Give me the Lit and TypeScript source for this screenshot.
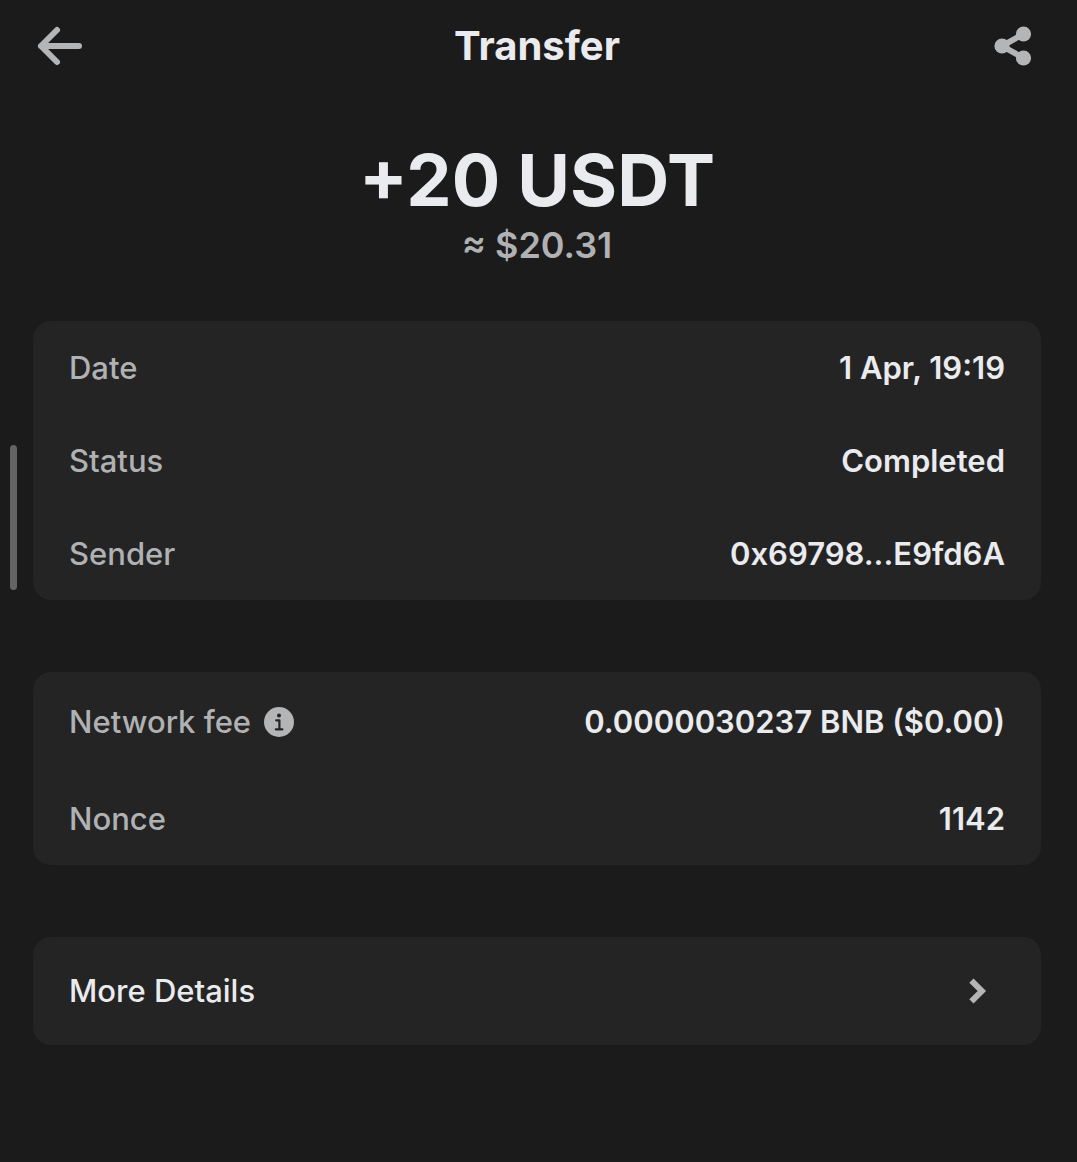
import { LitElement, html, css, nothing } from "lit";
import { customElement, property } from "lit/decorators.js";

interface Detail {
  label: string;
  value: string;
  info?: boolean;
}

const SUMMARY: Detail[] = [
  { label: "Date", value: "1 Apr, 19:19" },
  { label: "Status", value: "Completed" },
  { label: "Sender", value: "0x69798...E9fd6A" },
];

const NETWORK: Detail[] = [
  { label: "Network fee", value: "0.0000030237 BNB ($0.00)", info: true },
  { label: "Nonce", value: "1142" },
];

@customElement("detail-card")
export class DetailCard extends LitElement {
  @property({ attribute: false }) items: Detail[] = [];

  static styles = css`
    :host {
      display: block;
      background: #242424;
      border-radius: 18px;
      padding: 0 36px;
      font-size: 31px;
      line-height: 40px;
    }
    .list {
      margin: 0;
    }
    .row {
      display: flex;
      align-items: center;
      justify-content: space-between;
      gap: 24px;
      min-height: 93px;
    }
    .tall {
      min-height: 100px;
    }
    .label {
      display: flex;
      align-items: center;
      gap: 12px;
      color: #b0b1b3;
      font-weight: 500;
    }
    .value {
      margin: 0;
      color: #eaebee;
      font-weight: 600;
      text-align: right;
    }
    .info {
      display: block;
      padding: 0;
      border: 0;
      background: none;
      color: #b4b5b7;
      cursor: pointer;
    }
    .info svg {
      display: block;
    }
  `;

  render() {
    return html`
      <dl class="list">
        ${this.items.map(
          (item) => html`
            <div class="row ${item.info ? "tall" : ""}">
              <dt class="label">
                ${item.label}
                ${item.info
                  ? html`<button class="info" type="button" aria-label="About the network fee">
                      <svg width="32" height="32" viewBox="0 0 32 32" aria-hidden="true">
                        <circle cx="16" cy="16" r="15" fill="currentColor" />
                        <circle cx="16" cy="9.6" r="2" fill="#242424" />
                        <path
                          d="M13.2 14.3h3.2v9M12.8 23.3h6.6"
                          fill="none"
                          stroke="#242424"
                          stroke-width="2.2"
                          stroke-linecap="round"
                          stroke-linejoin="round"
                        />
                      </svg>
                    </button>`
                  : nothing}
              </dt>
              <dd class="value">${item.value}</dd>
            </div>
          `,
        )}
      </dl>
    `;
  }
}

@customElement("app-root")
export class AppRoot extends LitElement {
  static styles = css`
    :host {
      display: block;
      position: relative;
      box-sizing: border-box;
      min-height: 100vh;
      padding: 0 36px 36px 33px;
      background: #1b1b1b;
      color: #eaebee;
      font-family: Inter, "Liberation Sans", sans-serif;
    }
    .header {
      display: grid;
      grid-template-columns: 52px 1fr 52px;
      align-items: center;
      height: 92px;
    }
    .title {
      margin: 0;
      font-size: 40px;
      line-height: 52px;
      font-weight: 700;
      text-align: center;
    }
    .icon-button {
      display: block;
      padding: 0;
      border: 0;
      background: none;
      color: #b4b5b7;
      cursor: pointer;
    }
    .icon-button svg {
      display: block;
    }
    .summary {
      display: flex;
      flex-direction: column;
      align-items: center;
      padding: 45px 0 54px;
    }
    .amount {
      margin: 0;
      font-size: 72px;
      line-height: 86px;
      font-weight: 700;
    }
    .fiat {
      margin: 0;
      color: #b0b1b3;
      font-size: 36px;
      line-height: 44px;
      font-weight: 600;
    }
    .cards {
      display: flex;
      flex-direction: column;
      gap: 72px;
    }
    .more {
      display: flex;
      align-items: center;
      justify-content: space-between;
      min-height: 108px;
      padding: 0 36px;
      border: 0;
      border-radius: 18px;
      background: #242424;
      color: #eaebee;
      font-family: inherit;
      font-size: 31px;
      line-height: 40px;
      font-weight: 500;
      text-align: left;
      cursor: pointer;
    }
    .chevron {
      color: #b4b5b7;
    }
    .edge-handle {
      position: absolute;
      left: 10px;
      top: 445px;
      width: 7px;
      height: 145px;
      border-radius: 4px;
      background: #646464;
    }
  `;

  render() {
    return html`
      <header class="header">
        <button class="icon-button" type="button" aria-label="Back">
          <svg width="52" height="52" viewBox="0 0 52 52" aria-hidden="true">
            <path
              d="M46 26H8M24 10L8 26L24 42"
              fill="none"
              stroke="currentColor"
              stroke-width="6"
              stroke-linecap="round"
              stroke-linejoin="round"
            />
          </svg>
        </button>
        <h1 class="title">Transfer</h1>
        <button class="icon-button" type="button" aria-label="Share">
          <svg width="52" height="52" viewBox="0 0 52 52" aria-hidden="true">
            <path d="M34.5 14L13 26L34.5 38" fill="none" stroke="currentColor" stroke-width="6" />
            <circle cx="34.5" cy="14" r="7.6" fill="currentColor" />
            <circle cx="13" cy="26" r="7.6" fill="currentColor" />
            <circle cx="34.5" cy="38" r="7.6" fill="currentColor" />
          </svg>
        </button>
      </header>
      <main>
        <section class="summary">
          <p class="amount">+20 USDT</p>
          <p class="fiat">≈ $20.31</p>
        </section>
        <div class="cards">
          <detail-card .items=${SUMMARY}></detail-card>
          <detail-card .items=${NETWORK}></detail-card>
          <button class="more" type="button">
            More Details
            <svg class="chevron" width="54" height="32" viewBox="0 0 54 32" aria-hidden="true">
              <path d="M20.4 5.6L30.8 16L20.4 26.4" fill="none" stroke="currentColor" stroke-width="6" />
            </svg>
          </button>
        </div>
      </main>
      <div class="edge-handle"></div>
    `;
  }
}
